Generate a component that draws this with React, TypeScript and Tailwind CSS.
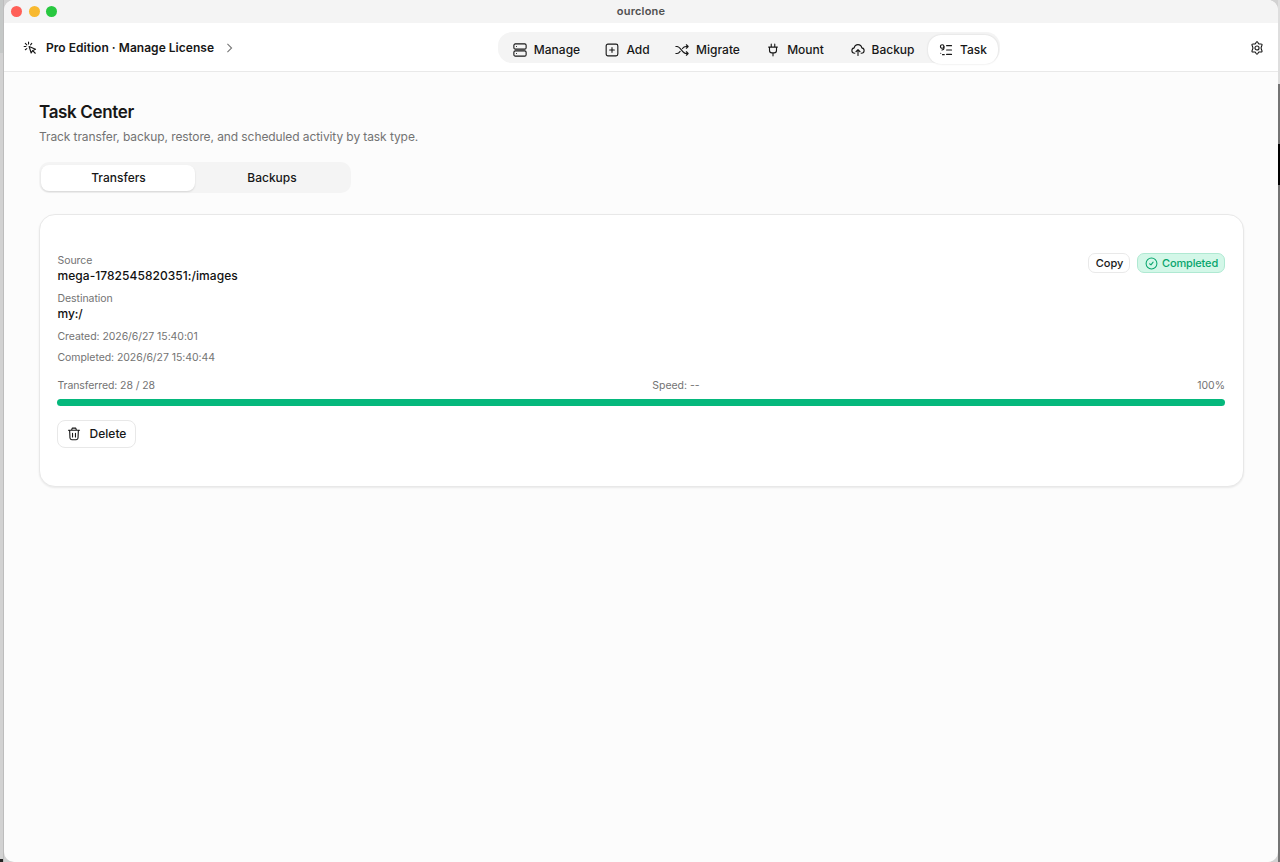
import type { ReactNode } from 'react';
import clsx from 'clsx';

type IconName =
  | 'cursor'
  | 'server'
  | 'add'
  | 'shuffle'
  | 'plug'
  | 'cloud'
  | 'list'
  | 'settings'
  | 'check'
  | 'trash';

const icons: Record<IconName, ReactNode> = {
  cursor: (
    <>
      <path d="M10.5 9.5 14 20.500 16.500 16.500 21.500 14Z" />
      <path d="m17 17 4 4" />
      <path d="M9.5 2v3M2 9.5h3M4 4l2.500 2.500M15 4l-2 2.500M4 15l2.500-2" />
    </>
  ),
  server: (
    <>
      <rect x="1.5" y="1.5" width="21" height="9" rx="2.5" />
      <rect x="1.5" y="13.5" width="21" height="9" rx="2.5" />
      <path d="M6 6h.01M6 18h.01" />
    </>
  ),
  add: (
    <>
      <rect x="2" y="2" width="20" height="20" rx="3" />
      <path d="M12 8v8M8 12h8" />
    </>
  ),
  shuffle: (
    <>
      <path d="m19.5 3 3 3-3 3M19.5 15l3 3-3 3" />
      <path d="M1.5 6h2c6.5 0 8.5 12 16 12h2M1.5 18h2c2.4 0 4-1.7 5.3-3.7M12.8 9.5C14.3 7.4 16 6 19 6h2.5" />
    </>
  ),
  plug: (
    <path d="M9 2v5M15 2v5M4.5 7h15M6 7v5.5c0 3 1.5 4.5 4 4.5h4c2.5 0 4-1.5 4-4.5V7M12 17v5" />
  ),
  cloud: (
    <>
      <path d="M6.5 17.5C3.5 17.5 1.5 15.5 1.5 12.8c0-2.3 1.7-4.2 4-4.5C6.2 5 8.7 2.8 12 2.8s5.8 2.2 6.5 5.5c2.3.3 4 2.2 4 4.5 0 2.7-2 4.7-5 4.7" />
      <path d="M12 21.5V12M8.500 15l3.500-3.500 3.500 3.500" />
    </>
  ),
  list: (
    <>
      <path d="M13 4.5h8.5M13 12h8.5M13 19.5h8.5" />
      <circle cx="5.5" cy="6" r="3" />
      <path d="M8.5 6v2.5c0 2-1 3.500-3.500 3.500M3 17.500h.01M6 20h3" />
    </>
  ),
  settings: (
    <>
      <path d="M12 1.3C13.7 1.3 14 4.3 15.3 5c1.3.7 4.3-.8 5.2.7.9 1.6-1.5 3.3-1.5 6.3s2.4 4.7 1.5 6.3c-.9 1.5-3.9 0-5.2.7-1.3.7-1.6 3.7-3.3 3.7S10 19.7 8.7 19c-1.3-.7-4.3.8-5.2-.7C2.6 16.7 5 15 5 12S2.6 7.3 3.5 5.7C4.4 4.2 7.4 5.7 8.7 5 10 4.3 10.3 1.3 12 1.3Z" />
      <circle cx="12" cy="12" r="3.5" />
    </>
  ),
  check: (
    <>
      <circle cx="12" cy="12" r="10" />
      <path d="m8.5 12.5 2.5 2 4-5" />
    </>
  ),
  trash: (
    <path d="m19.5 5.5-.6 13.5a3 3 0 0 1-3 2.8H8.1a3 3 0 0 1-3-2.8L4.5 5.5M2.5 5.5h19M8 5l1-3h6l1 3M9.5 11v6M14.5 11v6" />
  ),
};

function Icon({ name, className }: { name: IconName; className?: string }) {
  return (
    <svg
      viewBox="0 0 24 24"
      fill="none"
      stroke="currentColor"
      strokeWidth="1.9"
      strokeLinecap="round"
      strokeLinejoin="round"
      className={clsx('shrink-0', className)}
    >
      {icons[name]}
    </svg>
  );
}

const navItems: { label: string; icon: IconName; width: string }[] = [
  { label: 'Manage', icon: 'server', width: 'w-[93px]' },
  { label: 'Add', icon: 'add', width: 'w-[69px]' },
  { label: 'Migrate', icon: 'shuffle', width: 'w-[91px]' },
  { label: 'Mount', icon: 'plug', width: 'w-[84px]' },
  { label: 'Backup', icon: 'cloud', width: 'w-[91px]' },
  { label: 'Task', icon: 'list', width: 'w-[70px]' },
];

function TitleBar() {
  return (
    <div className="grid h-[23px] shrink-0 grid-cols-3 items-center bg-[#f4f4f4]">
      <div className="flex gap-[6.5px] pl-[7px]">
        <span className="size-[11px] rounded-full bg-[#ff5f57]" />
        <span className="size-[11px] rounded-full bg-[#f8b92f]" />
        <span className="size-[11px] rounded-full bg-[#28c840]" />
      </div>
      <span className="text-center text-[11px] font-semibold tracking-[0.2px] text-[#505050]">ourclone</span>
    </div>
  );
}

function Header() {
  return (
    <header className="flex h-[49px] shrink-0 items-center border-b border-[#e9e9e9] bg-white pr-[14px] pl-[19px]">
      <button className="flex w-[475px] items-center pt-[2px]">
        <Icon name="cursor" className="size-[14px]" />
        <span className="ml-[9px] text-[12px] font-semibold tracking-[0.03px]">Pro Edition · Manage License</span>
        <svg viewBox="0 0 8 12" fill="none" stroke="#777" strokeWidth="1.3" className="ml-3 h-[10px] w-[7px]">
          <path d="m1.5 1 5 5-5 5" />
        </svg>
      </button>
      <nav className="flex h-[31px] items-center rounded-[14px] bg-[#f4f4f4] px-[2px]">
        {navItems.map((item) => (
          <button
            key={item.label}
            className={clsx(
              'mt-[4px] flex h-[29px] items-center justify-center gap-[7px] rounded-[13px] pt-px text-[12px] font-medium',
              item.width,
              item.label === 'Task' && 'bg-white shadow-[0_0_2px_rgba(0,0,0,0.15)]',
            )}
          >
            <Icon name={item.icon} className="size-[14px]" />
            <span>{item.label}</span>
          </button>
        ))}
      </nav>
      <button className="ml-auto pt-px">
        <Icon name="settings" className="size-[14px]" />
      </button>
    </header>
  );
}

function TaskCard() {
  return (
    <section className="mt-[21px] h-[273px] rounded-[16px] border border-[#e8e8e8] bg-white pt-[38px] pr-[18px] pl-[17px] shadow-[0_1px_2px_rgba(0,0,0,0.08)]">
      <div className="flex justify-between">
        <div className="pl-[0.5px] text-[10.5px] tracking-[-0.06px] text-[#737373]">
          <p className="h-[14px] leading-[15px]">Source</p>
          <p className="h-[17px] text-[12px] leading-[17px] font-medium tracking-[0.05px] text-[#111]">mega-1782545820351:/images</p>
          <p className="mt-[7px] h-[14px] leading-[15px]">Destination</p>
          <p className="h-[17px] text-[12px] leading-[17px] font-medium text-[#111]">my:/</p>
          <p className="mt-[7px] leading-[15px]">Created: 2026/6/27 15:40:01</p>
          <p className="mt-[6px] leading-[15px]">Completed: 2026/6/27 15:40:44</p>
        </div>
        <div className="flex h-5 gap-[7px] text-[11px] font-medium">
          <button className="w-[42px] rounded-[7px] border border-[#e9e9e9] pl-px">Copy</button>
          <span className="flex w-[88px] items-center justify-center gap-1 rounded-[7px] border border-[#afe9d2] bg-[#d3f7e8] pl-px text-[#07a56d]">
            <Icon name="check" className="size-[13px]" />
            <span className="tracking-[-0.15px]">Completed</span>
          </span>
        </div>
      </div>
      <div className="mt-[13px] grid grid-cols-3 text-[10.5px] leading-[15px] tracking-[-0.03px] text-[#737373]">
        <span className="pl-[0.5px] tracking-[-0.1px]">Transferred: 28 / 28</span>
        <span className="pl-[206px]">Speed: --</span>
        <span className="text-right">100%</span>
      </div>
      <div className="mt-[6px] h-[7px] rounded-full bg-[#05b87c]" />
      <button className="mt-[14px] flex h-[28px] w-[79px] items-center justify-center gap-[9px] rounded-[8px] border border-[#e8e8e8] text-[12px] font-medium">
        <Icon name="trash" className="size-[14px]" />
        Delete
      </button>
    </section>
  );
}

export default function App() {
  return (
    <div className="flex h-[862px] w-[1280px] overflow-hidden bg-[#d2d2d2] font-['Inter',sans-serif] text-[#171717]">
      {/* Desktop edge */}
      <div className="flex w-1 shrink-0 flex-col border-r border-[#bdbdbd]">
        <div className="h-[53px] bg-[#c5c8c7]" />
        <div className="mt-auto h-[3px] bg-[#222]" />
      </div>
      <div className="flex min-w-0 flex-1 flex-col overflow-hidden rounded-[10px] bg-[#fcfcfc]">
        <TitleBar />
        <Header />
        <main className="pt-[29px] pr-[34px] pl-[35px]">
          <h1 className="h-[22px] text-[17px] leading-[22px] font-semibold tracking-[-0.35px]">Task Center</h1>
          <p className="mt-[5px] text-[12px] leading-[18px] tracking-[-0.09px] text-[#737373]">
            Track transfer, backup, restore, and scheduled activity by task type.
          </p>
          <div className="mt-[16px] flex h-[31px] w-[312px] items-center rounded-[10px] bg-[#f4f4f4] px-[2px] text-[12px] font-medium">
            <button className="h-[26px] w-[154px] rounded-[8px] bg-white pl-px shadow-[0_1px_2px_rgba(0,0,0,0.13)]">Transfers</button>
            <button className="h-[26px] flex-1">Backups</button>
          </div>
          <TaskCard />
        </main>
      </div>
      <div className="flex w-[2px] shrink-0 flex-col bg-[#747474]">
        <div className="h-[84px] bg-[#dedede]" />
        <div className="mt-[60px] h-[41px] bg-black" />
      </div>
    </div>
  );
}
